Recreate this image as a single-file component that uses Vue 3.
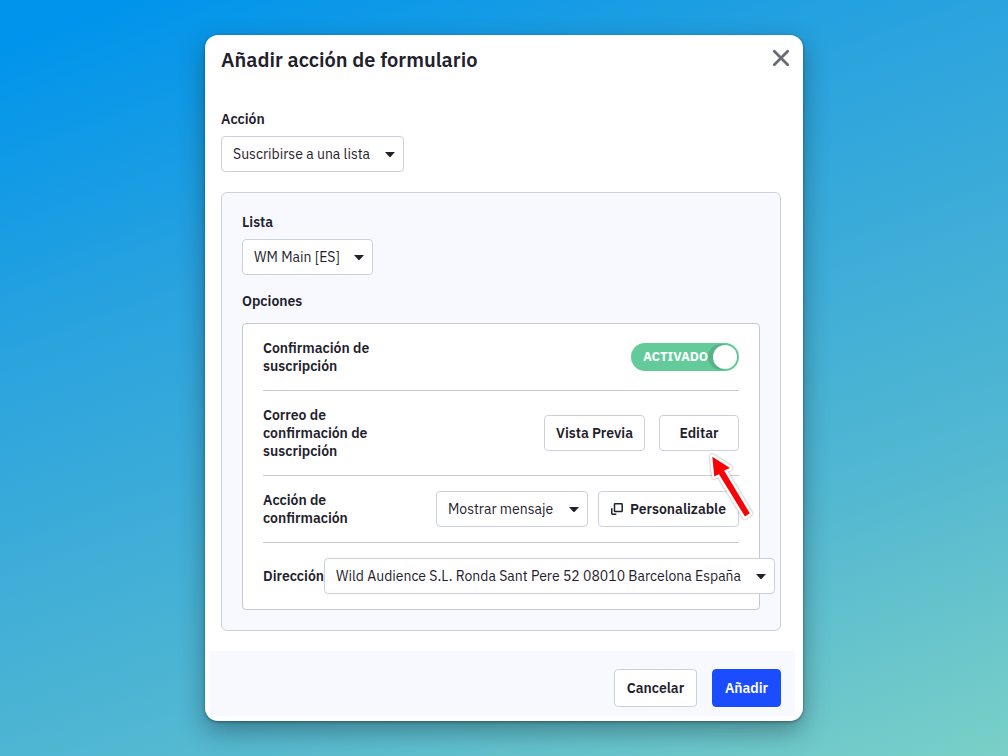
<script setup>
import { ref } from 'vue'

const action = ref('Suscribirse a una lista')
const list = ref('WM Main [ES]')
const confirmation = ref('Mostrar mensaje')
const address = ref('Wild Audience S.L. Ronda Sant Pere 52 08010 Barcelona España')
const enabled = ref(true)
</script>

<template>
  <main class="page">
    <section class="modal" role="dialog" aria-labelledby="modal-title">
      <header class="header">
        <h1 id="modal-title">Añadir acción de formulario</h1>
        <button class="close" type="button" aria-label="Cerrar">
          <svg width="18" height="18" viewBox="0 0 18 18"><path d="M2.3 2.3 15.7 15.7M15.7 2.3 2.3 15.7" fill="none" stroke="#6b6c73" stroke-width="2.8" stroke-linecap="round" /></svg>
        </button>
      </header>

      <div class="body">
        <label class="label" for="action">Acción</label>
        <div class="select action">
          <select id="action" v-model="action"><option>Suscribirse a una lista</option></select>
          <svg class="caret" width="10" height="6" viewBox="0 0 10 6"><path d="M0 0h10L5.7 4.7Q5 5.4 4.3 4.7Z" /></svg>
        </div>

        <div class="panel">
          <label class="label" for="list">Lista</label>
          <div class="select list">
            <select id="list" v-model="list"><option>WM Main [ES]</option></select>
            <svg class="caret" width="10" height="6" viewBox="0 0 10 6"><path d="M0 0h10L5.7 4.7Q5 5.4 4.3 4.7Z" /></svg>
          </div>

          <h2 class="options-title">Opciones</h2>
          <div class="options">
            <div class="row">
              <label class="name" for="enabled">Confirmación de suscripción</label>
              <span class="toggle">
                <input id="enabled" v-model="enabled" type="checkbox" role="switch" />
                <span class="state">ACTIVADO</span>
                <span class="knob"></span>
              </span>
            </div>
            <div class="row">
              <span class="name">Correo de confirmación de suscripción</span>
              <div class="controls wide">
                <button class="button preview" type="button">Vista Previa</button>
                <div class="pointed">
                  <button class="button edit" type="button">Editar</button>
                  <svg class="arrow" width="50" height="74" viewBox="706 450 50 74">
                    <path class="halo" d="M712.3 456.7 730 468 724 470.5 749.8 513.2 745 516.6 719 474.3 714.3 476.5Z" />
                    <path class="red" d="M712.3 456.7 730 468 724 470.5 749.8 513.2 745 516.6 719 474.3 714.3 476.5Z" />
                  </svg>
                </div>
              </div>
            </div>
            <div class="row">
              <label class="name" for="confirmation">Acción de confirmación</label>
              <div class="controls">
                <div class="select message">
                  <select id="confirmation" v-model="confirmation"><option>Mostrar mensaje</option></select>
                  <svg class="caret" width="10" height="6" viewBox="0 0 10 6"><path d="M0 0h10L5.7 4.7Q5 5.4 4.3 4.7Z" /></svg>
                </div>
                <button class="button custom" type="button">
                  <svg width="12" height="12" viewBox="0 0 12 12" fill="none" stroke="#1f212c" stroke-width="1.5"><rect x="3.5" y=".8" width="7.7" height="7.7" rx=".6" /><path d="M.8 5.2v5.3q0 .7.7.7h3.8" /></svg>
                  Personalizable
                </button>
              </div>
            </div>
            <div class="row">
              <label class="name short" for="address">Dirección</label>
              <div class="select address">
                <select id="address" v-model="address"><option>Wild Audience S.L. Ronda Sant Pere 52 08010 Barcelona España</option></select>
                <svg class="caret" width="10" height="6" viewBox="0 0 10 6"><path d="M0 0h10L5.7 4.7Q5 5.4 4.3 4.7Z" /></svg>
              </div>
            </div>
          </div>
        </div>
      </div>

      <footer class="footer">
        <button class="button cancel" type="button">Cancelar</button>
        <button class="button primary" type="button">Añadir</button>
      </footer>
    </section>
  </main>
</template>

<style>
body {
  margin: 0;
}
</style>

<style scoped>
* {
  box-sizing: border-box;
}
.page {
  min-height: 100vh;
  display: grid;
  place-items: center;
  padding: 35px 20px;
  background: linear-gradient(160deg, #0094ec 4%, #2aa3de 32%, #53b8d1 72%, #7ad0c7 100%);
  color: #1f212c;
  font: 14px/18px "IBM Plex Sans", Roboto, sans-serif;
}
.modal {
  width: 100%;
  max-width: 598px;
  padding: 0 8px 5px 5px;
  border-radius: 13px;
  background: #fff;
  box-shadow: 0 1px 3px rgba(20, 40, 50, 0.5), 0 10px 26px rgba(20, 40, 50, 0.42);
}
.header {
  display: flex;
  align-items: center;
  justify-content: space-between;
  padding: 10px 5px 10px 11px;
}
h1 {
  margin: 0;
  font-size: 20px;
  line-height: 30px;
  font-weight: 600;
}
.close {
  display: flex;
  padding: 0 0 4px;
  border: 0;
  background: none;
}
.body {
  padding: 25px 14px 20px 11px;
}
.label {
  display: block;
  margin-bottom: 8px;
  font-weight: 600;
}
.select {
  position: relative;
  flex: none;
  height: 36px;
}
select {
  appearance: none;
  width: 100%;
  height: 100%;
  padding: 0 28px 0 11px;
  border: 1px solid #cdd0e0;
  border-radius: 4px;
  background: #fff;
  color: inherit;
  font: inherit;
}
.caret {
  position: absolute;
  top: 16px;
  right: 9px;
  fill: #1f212c;
  pointer-events: none;
}
.action {
  width: 183px;
}
.list {
  width: 131px;
}
.message {
  width: 152px;
}
.address {
  width: 451px;
}
.panel {
  margin-top: 20px;
  padding: 20px;
  border: 1px solid #cdd0e0;
  border-radius: 6px;
  background: #f8f9ff;
}
.options-title {
  margin: 17px 0 13px;
  font-size: 14px;
  line-height: 18px;
  font-weight: 600;
}
.options {
  padding: 0 20px;
  border: 1px solid #c8c9cf;
  border-radius: 4px;
  background: #fff;
}
.row {
  display: flex;
  align-items: center;
  justify-content: space-between;
  padding: 15px 0;
}
.row + .row {
  border-top: 1px solid #c8c9cf;
}
.name {
  flex: none;
  width: 120px;
  font-weight: 600;
}
.short {
  width: 61px;
}
.controls {
  display: flex;
  gap: 10px;
}
.wide {
  gap: 14px;
}
.button {
  display: inline-flex;
  align-items: center;
  justify-content: center;
  gap: 7px;
  height: 36px;
  padding: 0;
  border: 1px solid #cdd0e0;
  border-radius: 4px;
  background: #fff;
  color: inherit;
  font: inherit;
  font-weight: 600;
}
.preview {
  width: 101px;
}
.edit {
  width: 80px;
}
.custom {
  width: 141px;
}
.pointed {
  position: relative;
}
.arrow {
  position: absolute;
  top: 35px;
  left: 47px;
  z-index: 1;
  pointer-events: none;
  filter: drop-shadow(0 0 1px rgba(0, 0, 0, 0.4));
}
.halo {
  fill: #fff;
  stroke: #fff;
  stroke-width: 5px;
  stroke-linejoin: round;
}
.red {
  fill: #fb0007;
}
.toggle {
  position: relative;
  display: flex;
  align-items: center;
  justify-content: space-between;
  width: 108px;
  height: 28px;
  padding: 0 2px 0 12px;
  border-radius: 14px;
  overflow: hidden;
  background: #62cb99;
  color: #fff;
  font-size: 13px;
  font-weight: 700;
}
.toggle input {
  position: absolute;
  inset: 0;
  width: 100%;
  height: 100%;
  margin: 0;
  opacity: 0;
}
.knob {
  width: 24px;
  height: 24px;
  border-radius: 50%;
  background: #fff;
  box-shadow: -4px 0 0 1px #57b387;
}
.footer {
  display: flex;
  justify-content: flex-end;
  gap: 15px;
  padding: 18px 14px 9px;
  background: #f8f9ff;
}
.footer .button {
  height: 38px;
}
.cancel {
  width: 83px;
}
.footer .primary {
  width: 69px;
  border-color: #1b4dff;
  background: #1b4dff;
  color: #fff;
}
</style>
